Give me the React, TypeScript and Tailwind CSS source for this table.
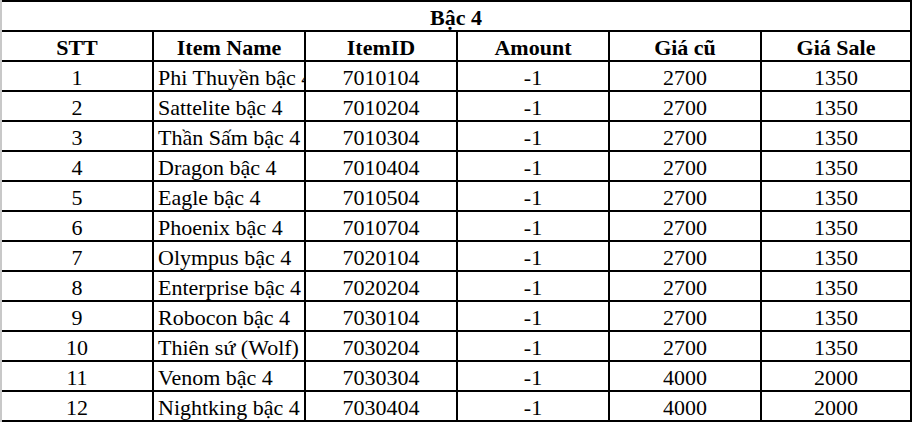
import React from "react";

const rows: [string, string, string, string, string, string][] = [
  ["1", "Phi Thuyền bậc 4", "7010104", "-1", "2700", "1350"],
  ["2", "Sattelite bậc 4", "7010204", "-1", "2700", "1350"],
  ["3", "Thần Sấm bậc 4", "7010304", "-1", "2700", "1350"],
  ["4", "Dragon bậc 4", "7010404", "-1", "2700", "1350"],
  ["5", "Eagle bậc 4", "7010504", "-1", "2700", "1350"],
  ["6", "Phoenix bậc 4", "7010704", "-1", "2700", "1350"],
  ["7", "Olympus bậc 4", "7020104", "-1", "2700", "1350"],
  ["8", "Enterprise bậc 4", "7020204", "-1", "2700", "1350"],
  ["9", "Robocon bậc 4", "7030104", "-1", "2700", "1350"],
  ["10", "Thiên sứ (Wolf)", "7030204", "-1", "2700", "1350"],
  ["11", "Venom bậc 4", "7030304", "-1", "4000", "2000"],
  ["12", "Nightking bậc 4", "7030404", "-1", "4000", "2000"],
];

const headers = ["STT", "Item Name", "ItemID", "Amount", "Giá cũ", "Giá Sale"];
const widths = ["w-[152px]", "w-[152px]", "w-[152px]", "w-[152px]", "w-[152px]", "w-[150px]"];

export default function App() {
  return (
    <div
      className="flex w-[914px] h-[422px] bg-white text-black overflow-hidden"
      style={{ fontFamily: '"Liberation Serif", "Times New Roman", serif' }}
    >
      <div className="w-[2px] h-[422px] bg-[#c8c8c8] shrink-0" />
      <div className="w-[910px] shrink-0 border-t-2 border-black text-[22px]">
        <div className="h-[30px] border-b-2 border-r-2 border-black flex items-end justify-center font-bold">
          <span className="leading-[25px]">Bậc 4</span>
        </div>
        <div className="flex h-[30px] border-b-2 border-black font-bold">
          {headers.map((h, i) => (
            <div
              key={h}
              className={`${widths[i]} shrink-0 border-r-2 border-black flex items-end justify-center overflow-hidden whitespace-nowrap`}
            >
              <span className="leading-[25px]">{h}</span>
            </div>
          ))}
        </div>
        {rows.map((r) => (
          <div key={r[0]} className="flex h-[30px] border-b-2 border-black">
            {r.map((c, i) => (
              <div
                key={i}
                className={`${widths[i]} shrink-0 border-r-2 border-black flex items-end overflow-hidden whitespace-nowrap ${
                  i === 1 ? "justify-start pl-[4px]" : "justify-center"
                }`}
              >
                <span className="leading-[25px]">{c}</span>
              </div>
            ))}
          </div>
        ))}
      </div>
    </div>
  );
}
